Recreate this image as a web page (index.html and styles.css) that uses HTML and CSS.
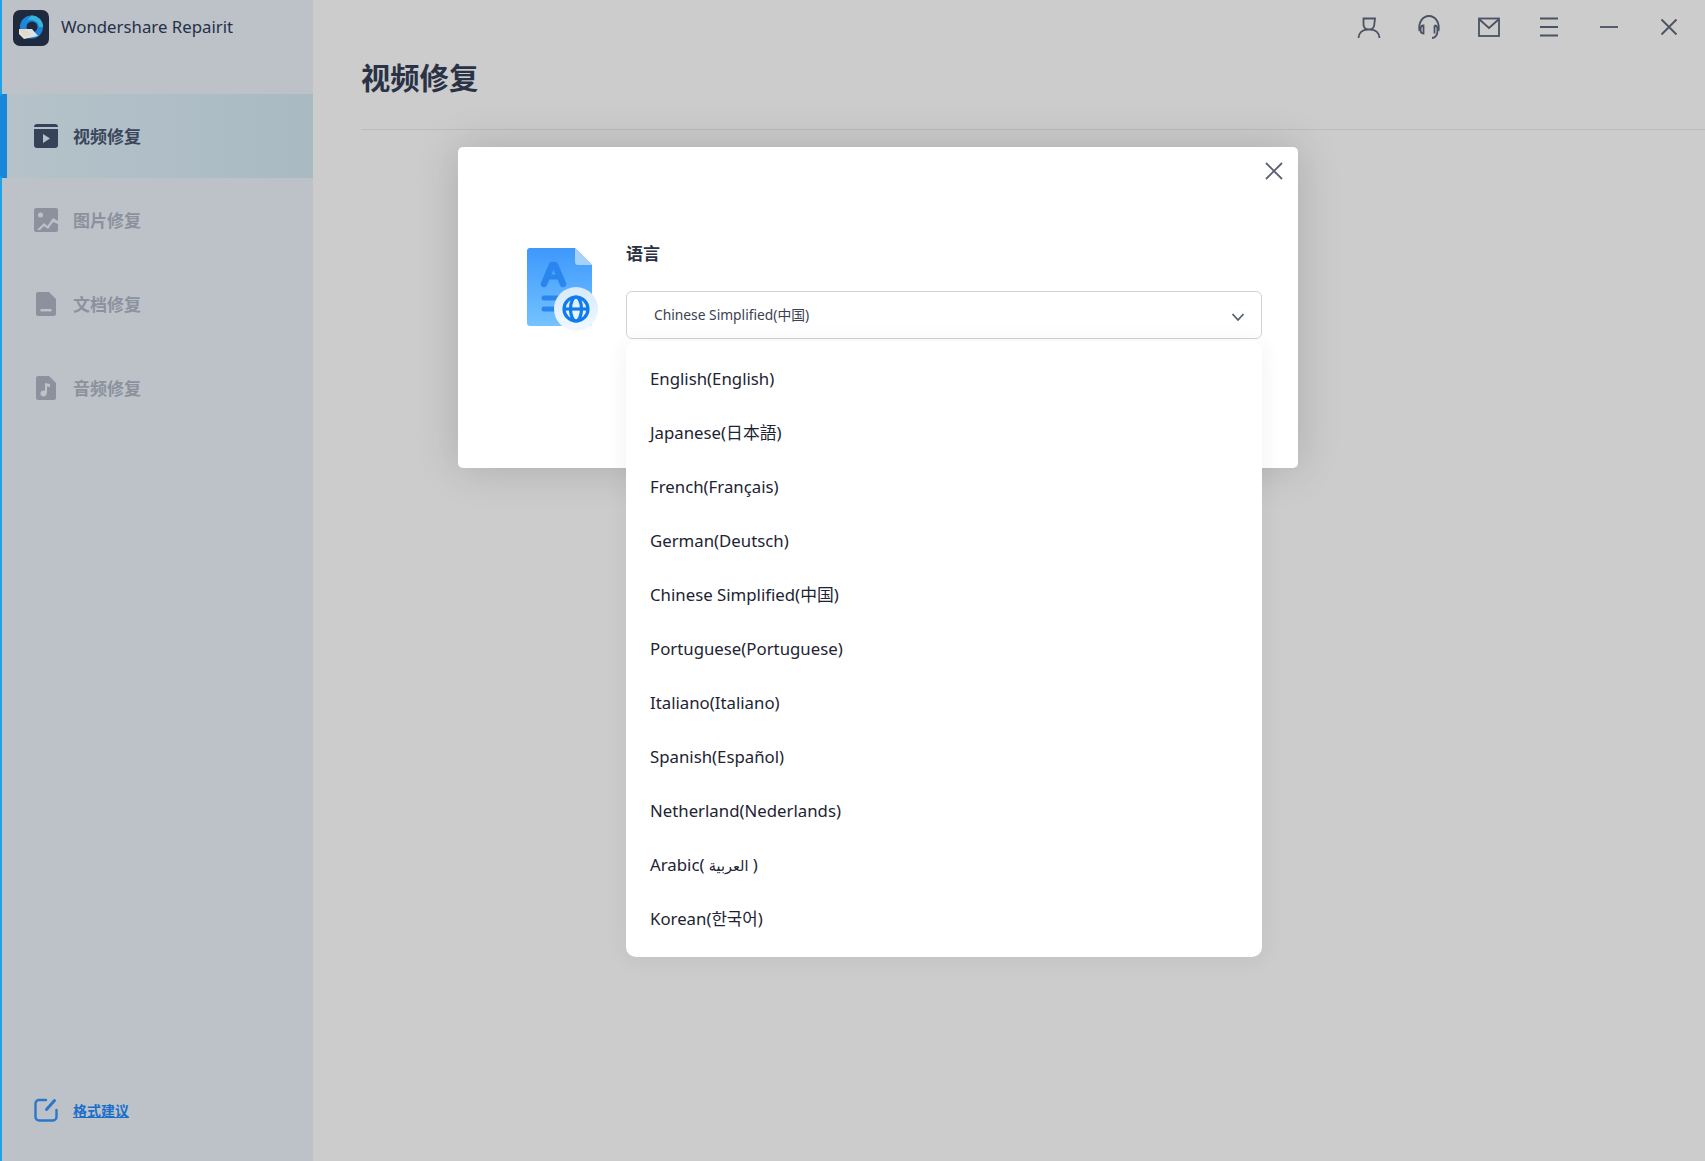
FILE: index.html
```html
<!DOCTYPE html>
<html lang="zh">
<head>
<meta charset="utf-8">
<title>Wondershare Repairit</title>
<link rel="stylesheet" href="styles.css">
</head>
<body>
<div class="app">
  <aside class="sidebar">
    <div class="brand">
      <svg class="logo" viewBox="0 0 36 36"><rect width="36" height="36" rx="7" fill="#1f2a3e"/><circle cx="18.5" cy="17" r="11.5" fill="#1b86dc"/><path d="M18.5 5.5a11.5 11.5 0 0 1 11.500 11.500h-4a8 8 0 0 0-15-3z" fill="#35b6dd"/><circle cx="19" cy="17" r="5.500" fill="#1f2a3e"/><path d="M6 19l13 0 6 7-14 3-5-5z" fill="#dfe3e3"/><path d="M6 19h7l5 6-7 2z" fill="#edc9a8" opacity=".5"/></svg>
      <span class="brand-name">Wondershare Repairit</span>
    </div>
    <nav class="nav">
      <a class="nav-item active">
        <svg class="nav-icon" viewBox="0 0 24 24"><path d="M3 0h18a3 3 0 0 1 3 3H0a3 3 0 0 1 3-3z" fill="#364259"/><path fill-rule="evenodd" d="M0 5h24v16a3 3 0 0 1-3 3H3a3 3 0 0 1-3-3zm9 5v9l7-4.500z" fill="#364259"/></svg>
        <span>视频修复</span>
      </a>
      <a class="nav-item">
        <svg class="nav-icon" viewBox="0 0 24 24"><rect width="24" height="24" rx="2" fill="#8b929d"/><circle cx="6.500" cy="7" r="2.500" fill="#bdc2c9"/><path d="M3 22l7-7 3.500 3L19 10l5 3v3l-5-2-5 7-4-3-4 4z" fill="#bdc2c9"/></svg>
        <span>图片修复</span>
      </a>
      <a class="nav-item">
        <svg class="nav-icon" viewBox="0 0 24 24"><path d="M4 0h11l7 7v15a2 2 0 0 1-2 2H4a2 2 0 0 1-2-2V2a2 2 0 0 1 2-2z" fill="#8b929d"/><rect x="6.500" y="17" width="11" height="2.400" fill="#bdc2c9"/></svg>
        <span>文档修复</span>
      </a>
      <a class="nav-item">
        <svg class="nav-icon" viewBox="0 0 24 24"><path d="M4 0h11l7 7v15a2 2 0 0 1-2 2H4a2 2 0 0 1-2-2V2a2 2 0 0 1 2-2z" fill="#8b929d"/><circle cx="9.500" cy="17.500" r="3" fill="#bdc2c9"/><path d="M11 17V7l5 1v3l-3-.500v6.500z" fill="#bdc2c9"/></svg>
        <span>音频修复</span>
      </a>
    </nav>
    <a class="suggest">
      <svg class="nav-icon" viewBox="0 0 24 24" fill="none" stroke="#2a77cc" stroke-width="2.400" stroke-linecap="round"><path d="M12 2H5a3.500 3.500 0 0 0-3.500 3.500V19A3.500 3.500 0 0 0 5 22.500h14a3.500 3.500 0 0 0 3.500-3.500v-7"/><path d="M12.500 11.500L20.500 2.500" stroke-width="3"/></svg>
      <span class="suggest-text">格式建议</span>
    </a>
  </aside>
  <main class="main">
    <div class="toolbar">
      <svg class="tool" viewBox="0 0 24 24"><path d="M6.500 3.500h11.500l-1 8a5 5 0 0 1-3.500 3h-3a5.500 5.500 0 0 1-4-5.500zM1.500 23c0-5 4-8.500 9-8.500h3c5 0 9 3.500 9 8.500"/></svg>
      <svg class="tool" viewBox="0 0 24 24"><path d="M2.500 16C1 7 6 1 12 1s11 6 9.500 15"/><path d="M6.500 10.500c-2.500 0-3 2-3 4s.5 4 3 4zM17.500 10.500c2.500 0 3 2 3 4s.5 8-5.500 8.500M17.500 10.500v8"/></svg>
      <svg class="tool" viewBox="0 0 24 24"><rect x="2" y="3.500" width="20" height="17.500"/><path d="M2.500 4.500L12 13l9.500-8.500"/></svg>
      <svg class="tool" viewBox="0 0 24 24"><path d="M3 3.500h18M3 12h18M3 20.500h18"/></svg>
      <svg class="tool" viewBox="0 0 24 24"><path d="M3 12h18"/></svg>
      <svg class="tool" viewBox="0 0 24 24"><path d="M4.500 4.500l15 15M19.500 4.500l-15 15"/></svg>
    </div>
    <h1 class="page-title">视频修复</h1>
    <div class="divider"></div>
  </main>
</div>
<div class="modal">
  <svg class="modal-close" viewBox="0 0 18 18"><path d="M1 1l16 16M17 1L1 17"/></svg>
  <svg class="lang-icon" viewBox="0 0 74 84">
    <defs>
      <linearGradient id="docg" x1="0" y1="0" x2="0" y2="1"><stop offset="0" stop-color="#3d98fb"/><stop offset="1" stop-color="#74c3ff"/></linearGradient>
      <linearGradient id="ring" x1="0" y1="0" x2="0" y2="1"><stop offset="0" stop-color="#d6e9fb"/><stop offset="1" stop-color="#f2f9ff"/></linearGradient>
    </defs>
    <path d="M4 1h45l17 17v58a3 3 0 0 1-3 3H4a3 3 0 0 1-3-3V4a3 3 0 0 1 3-3z" fill="url(#docg)"/>
    <path d="M49 1l17 17H52a3 3 0 0 1-3-3z" fill="#a5d2fb"/>
    <path d="M18 37l8-19h3l8 19" fill="none" stroke="#2a86ee" stroke-width="6.500" stroke-linecap="round" stroke-linejoin="round"/>
    <path d="M21 30h14" stroke="#2a86ee" stroke-width="5"/>
    <path d="M18 51h14M18 62h12" stroke="#2a86ee" stroke-width="5" stroke-linecap="round"/>
    <circle cx="50" cy="62" r="22" fill="url(#ring)"/>
    <g fill="none" stroke="#0f7bef" stroke-width="3.200"><circle cx="50" cy="62" r="12"/><ellipse cx="50" cy="62" rx="5.500" ry="12"/><path d="M38 62h24"/></g>
  </svg>
  <div class="lang-field">
    <label class="lang-label">语言</label>
    <div class="select">
      <span>Chinese Simplified(中国)</span>
      <svg class="chevron" viewBox="0 0 14 10"><path d="M1.500 2L7 8l5.500-6"/></svg>
    </div>
  </div>
</div>
<ul class="dropdown">
  <li>English(English)</li>
  <li>Japanese(日本語)</li>
  <li>French(Français)</li>
  <li>German(Deutsch)</li>
  <li>Chinese Simplified(中国)</li>
  <li>Portuguese(Portuguese)</li>
  <li>Italiano(Italiano)</li>
  <li>Spanish(Español)</li>
  <li>Netherland(Nederlands)</li>
  <li>Arabic( <span class="ar">العربية</span> )</li>
  <li>Korean(한국어)</li>
</ul>
</body>
</html>
```
FILE: styles.css
```css
* { box-sizing: border-box; }
html, body { margin: 0; height: 100%; overflow: hidden; }
body { font-family: "Noto Sans", "Noto Sans CJK SC", sans-serif; background: #cccccc; color: #1f2738; }
.app { display: flex; height: 1161px; }
.sidebar { width: 313px; flex: none; display: flex; flex-direction: column; background: #bdc2c9; border-left: 2px solid #1fa3e8; }
.brand { height: 94px; padding: 9px 0 0 11px; display: flex; align-items: flex-start; gap: 12px; }
.logo { width: 36px; height: 36px; flex: none; margin-top: 1px; }
.brand-name { font-size: 16.800px; line-height: 36px; color: #26304a; }
.nav { display: flex; flex-direction: column; }
.nav-item { height: 84px; display: flex; align-items: center; gap: 15px; padding: 0 0 1px 32px; font-size: 17px; font-weight: 700; color: #8b929d; }
.nav-item.active { color: #3a465b; background: linear-gradient(90deg, #b5c2ca, #a9bac3); border-left: 7px solid #1787dc; border-radius: 3px 0 0 3px; margin-left: -2px; padding-left: 27px; }
.nav-icon { width: 24px; height: 24px; flex: none; }
.suggest { margin-top: auto; height: 48px; margin-bottom: 27px; display: flex; align-items: center; gap: 15px; padding-left: 32px; }
.suggest-text { font-size: 14px; font-weight: 700; color: #1a6fcb; text-decoration: underline; }
.main { flex: 1; padding: 0 0 0 48px; display: flex; flex-direction: column; }
.toolbar { height: 54px; padding: 15px 24px 0 0; display: flex; justify-content: flex-end; gap: 36px; }
.tool { width: 24px; height: 24px; fill: none; stroke: #4a5263; stroke-width: 1.800; }
.page-title { margin: 0; height: 75px; line-height: 48px; font-size: 29.300px; font-weight: 700; color: #2a3346; }
.divider { height: 1px; background: #bcbcbc; }
.modal { position: absolute; left: 458px; top: 147px; width: 840px; height: 321px; background: #fff; border-radius: 5px; box-shadow: 0 0 44px rgba(0, 0, 0, .16); display: flex; padding: 101px 36px 0 68px; align-items: flex-start; }
.modal-close { position: absolute; right: 15px; top: 15px; width: 18px; height: 18px; fill: none; stroke: #596173; stroke-width: 1.800; }
.lang-icon { width: 74px; height: 84px; flex: none; margin-right: 26px; margin-top: -1px; }
.lang-field { flex: 1; margin-top: -8px; }
.lang-label { display: block; font-size: 17px; font-weight: 700; line-height: 27px; margin-bottom: 24px; color: #2a3346; }
.select { height: 48px; border: 1px solid #cfd2d9; border-radius: 6px; display: flex; align-items: center; justify-content: space-between; padding: 0 16px 2px 27px; font-size: 13.800px; color: #3a4254; }
.chevron { width: 14px; height: 10px; fill: none; stroke: #555d6e; stroke-width: 1.800; margin-top: 6px; }
.dropdown { position: absolute; left: 626px; top: 341px; width: 636px; height: 616px; margin: 0; padding: 11px 0 0; list-style: none; background: #fff; border-radius: 10px; box-shadow: 0 2px 24px rgba(0, 0, 0, .06); }
.dropdown li { height: 54px; line-height: 54px; padding-left: 24px; font-size: 16.800px; color: #1d2433; font-family: "Noto Sans", "Noto Sans CJK JP", "Noto Sans CJK KR", sans-serif; }
.ar { font-family: "DejaVu Sans", sans-serif; font-size: 14.500px; }
```
